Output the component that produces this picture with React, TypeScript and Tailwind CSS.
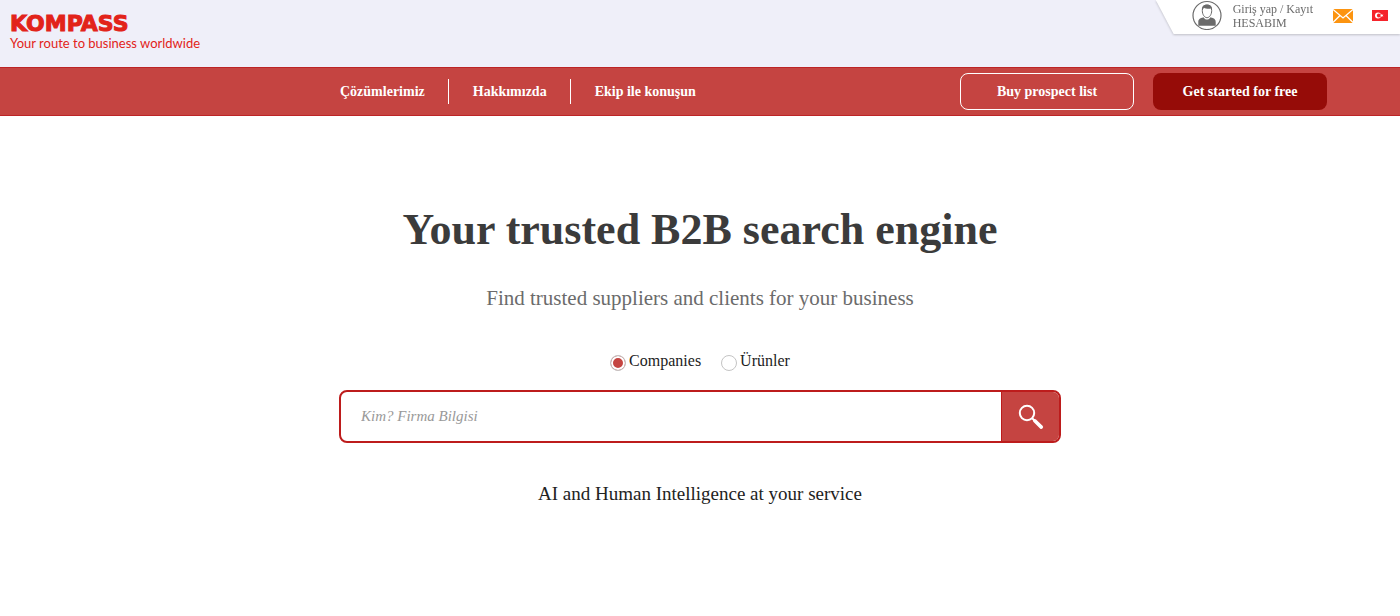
import { useState } from "react";

const navLinks = ["Çözümlerimiz", "Hakkımızda", "Ekip ile konuşun"];

const searchTypes = [
  { id: "companies", label: "Companies" },
  { id: "products", label: "Ürünler" },
];

function Avatar() {
  return (
    <svg width="30" height="30" viewBox="0 0 30 30" aria-hidden="true">
      <circle cx="15" cy="15.500" r="14" fill="#fff" stroke="#6b6b6b" strokeWidth="1.2" />
      <path
        d="M6.300 25.800V22c0-2.600 1.400-3.700 5.200-4.800 1 1.700 2 2.400 3.500 2.400s2.500-.7 3.500-2.400c3.800 1.100 5.200 2.200 5.200 4.800v3.800z"
        fill="#6b6b6b"
      />
      <path
        d="M10.300 10.500c0-3.500 1.800-5.300 4.700-5.300s4.700 1.800 4.700 5.300c0 4-2.200 7.200-4.700 7.200s-4.700-3.200-4.700-7.200z"
        fill="#fff"
        stroke="#6b6b6b"
        strokeWidth="1"
      />
      <path d="M10 10.500C9.500 6.500 11.500 4.500 15 4.500s5.500 2 5 6l-1-2c-2 .4-5.500.3-7-.8z" fill="#6b6b6b" />
    </svg>
  );
}

function MailIcon() {
  return (
    <svg width="20" height="14" viewBox="0 0 20 14" aria-hidden="true">
      <rect width="20" height="14" rx="1" fill="#fc9410" />
      <path d="M0 .5 10 9 20 .5M0 13.500 7 6.500M20 13.500l-7-7" fill="none" stroke="#fff" strokeWidth="1.300" />
    </svg>
  );
}

function TurkishFlag() {
  return (
    <svg width="16" height="11" viewBox="0 0 16 11" aria-hidden="true">
      <rect width="16" height="11" fill="#f5242c" />
      <circle cx="6" cy="5.500" r="3" fill="#fff" />
      <circle cx="6.900" cy="5.500" r="2" fill="#f5242c" />
      <path d="M8 5.500l1.200-.5.200-1.200.8 1 1.200-.3-.7 1 .7 1-1.200-.3-.8 1-.200-1.200z" fill="#fff" />
    </svg>
  );
}

function SearchIcon() {
  return (
    <svg width="26" height="26" viewBox="0 0 26 26" fill="none" stroke="#fff" aria-hidden="true">
      <circle cx="9" cy="9" r="7.200" strokeWidth="2" />
      <path d="M14.200 14.200l2.500 2.500" strokeWidth="2" />
      <path d="M16.800 16.800l6.500 6.300" strokeWidth="3.600" strokeLinecap="round" />
    </svg>
  );
}

function Header() {
  return (
    <header className="flex h-[67px] items-start justify-between bg-[#efeff9]">
      <a href="#" className="flex flex-col pt-3 pl-[10px] text-[#e2231a]">
        <span className="font-['DejaVu_Sans'] text-[22px] leading-[24px] font-bold [-webkit-text-stroke:1px_#e2231a]">
          KOMPASS
        </span>
        <span className="font-[Lato] text-[13px] leading-[14px]">Your route to business worldwide</span>
      </a>
      <div className="drop-shadow-[0_1px_1px_rgba(0,0,0,0.2)]">
        <div className="flex h-[34px] items-start bg-white pr-3 pl-9 [clip-path:polygon(0_0,100%_0,100%_100%,18px_100%)]">
          <a href="#" className="flex items-start text-[12px] leading-[14px] text-[#6b6b6b]">
            <Avatar />
            <span className="ml-[11px] pt-[2px]">
              Giriş yap / Kayıt
              <br />
              HESABIM
            </span>
          </a>
          <a href="#" aria-label="Mesajlar" className="ml-5 pt-[9px]">
            <MailIcon />
          </a>
          <button type="button" aria-label="Türkçe" className="ml-[19px] pt-[10px]">
            <TurkishFlag />
          </button>
        </div>
      </div>
    </header>
  );
}

function NavBar() {
  return (
    <nav className="flex h-[49px] items-center justify-between border-y border-[#bd2426] bg-[#c54441] pr-[73px] pl-[340px] text-[14px] font-bold text-white">
      <ul className="flex items-center">
        {navLinks.map((link, i) => (
          <li key={link} className={i > 0 ? "ml-[23px] border-l border-white py-[2px] pl-6" : "py-[2px]"}>
            <a href="#">{link}</a>
          </li>
        ))}
      </ul>
      <div className="flex gap-[19px]">
        <button type="button" className="h-[37px] w-[174px] rounded-lg border border-white">
          Buy prospect list
        </button>
        <button type="button" className="h-[37px] w-[174px] rounded-lg bg-[#960c08]">
          Get started for free
        </button>
      </div>
    </nav>
  );
}

export default function App() {
  const [searchType, setSearchType] = useState("companies");

  return (
    <div className="min-h-screen bg-white font-['Liberation_Serif',serif]">
      <Header />
      <NavBar />
      <main className="mx-auto flex max-w-[722px] flex-col items-center pt-[84px]">
        <h1 className="text-[44px] leading-[60px] font-bold text-[#3b3b3b]">Your trusted B2B search engine</h1>
        <p className="mt-6 text-[21px] leading-[28px] text-[#6b6b6b]">
          Find trusted suppliers and clients for your business
        </p>
        <form className="w-full" onSubmit={(e) => e.preventDefault()}>
          <div className="mt-[39px] flex justify-center gap-5">
            {searchTypes.map((type) => (
              <label key={type.id} className="flex items-start gap-[3px] text-[16px] leading-[20px] text-[#222]">
                <input
                  type="radio"
                  name="searchType"
                  checked={searchType === type.id}
                  onChange={() => setSearchType(type.id)}
                  className="mt-1 size-4 appearance-none rounded-full border border-[#c4c4c4] bg-white checked:bg-[#c54441] checked:shadow-[inset_0_0_0_2px_white]"
                />
                {type.label}
              </label>
            ))}
          </div>
          <div className="mt-[19px] flex h-[53px] overflow-hidden rounded-lg border-2 border-[#bd1c1c]">
            <input
              type="text"
              aria-label="Kim? Firma Bilgisi"
              placeholder="Kim? Firma Bilgisi"
              className="min-w-0 flex-1 px-5 text-[15px] outline-none placeholder:text-[#999] placeholder:italic"
            />
            <button
              type="submit"
              aria-label="Search"
              className="flex w-[58px] items-center justify-center border-l border-[#bd1c1c] bg-[#c54441]"
            >
              <SearchIcon />
            </button>
          </div>
        </form>
        <p className="mt-[38px] text-[19px] leading-[26px] text-[#222]">AI and Human Intelligence at your service</p>
      </main>
    </div>
  );
}
